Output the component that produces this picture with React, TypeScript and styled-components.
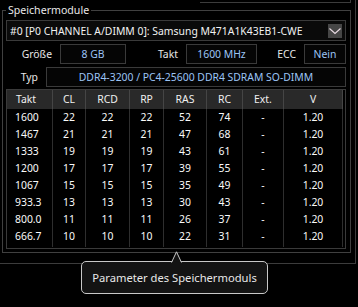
import React from 'react';
import styled, { createGlobalStyle } from 'styled-components';

const GlobalStyle = createGlobalStyle`
  html, body {
    margin: 0;
    padding: 0;
    background: #000;
  }
  body {
    font-family: "Noto Sans", "Liberation Sans", sans-serif;
    font-size: 10.4px;
    color: #e6e6e6;
  }
`;

// ====

const Screen = styled.div`
  position: relative;
  width: 358px;
  height: 307px;
`;

const Page = styled.div`
  width: 356px;
  height: 264px;
  box-sizing: border-box;
  border-right: 1px solid #3c3c3c;
  border-bottom: 1px solid #3c3c3c;
  display: flex;
  flex-direction: column;
`;

const TopEdge = styled.div`
  align-self: flex-start;
  margin-left: 200px;
  width: 151px;
  height: 3px;
  box-sizing: border-box;
  border-right: 1px solid #3c3c3c;
  border-bottom: 1px solid #3c3c3c;
`;

const GroupBox = styled.fieldset`
  margin: 0 0 0 2px;
  width: 349px;
  min-width: 0;
  box-sizing: border-box;
  border: 1px solid #404040;
  padding: 3px 4px 3px 3px;
  display: flex;
  flex-direction: column;
`;

const Legend = styled.legend`
  padding: 0 2px;
  font-size: 10.6px;
  line-height: 14px;
  color: #e8e8e8;
`;

const Combo = styled.div`
  height: 21px;
  box-sizing: border-box;
  border: 1px solid #3a3a3a;
  background: #0a0a0a;
  display: flex;
  align-items: center;
  padding: 0 3px 0 3px;
`;

const ComboText = styled.span`
  flex: 1;
  color: #f2f2f2;
  white-space: nowrap;
  overflow: hidden;
`;

const ComboButton = styled.span`
  width: 14px;
  height: 14px;
  background: #464646;
  display: flex;
  align-items: center;
  justify-content: center;
`;

const FieldRow = styled.div<{ $gap: number }>`
  display: flex;
  height: 20px;
  margin-top: ${({ $gap }) => $gap}px;
`;

const Label = styled.span<{ $w: number }>`
  flex: none;
  width: ${({ $w }) => $w}px;
  box-sizing: border-box;
  padding-right: 8px;
  text-align: right;
  line-height: 20px;
  color: #e8e8e8;
`;

const ValueBox = styled.span<{ $w?: number }>`
  flex: ${({ $w }) => ($w ? 'none' : '1')};
  width: ${({ $w }) => ($w ? `${$w}px` : 'auto')};
  box-sizing: border-box;
  border: 1px solid #3a3a3a;
  background: #050505;
  color: #9cc4f5;
  text-align: center;
  line-height: 18px;
  white-space: nowrap;
`;

const TableWrap = styled.div`
  margin-top: 2px;
  border: 1px solid #3a3a3a;
  padding: 0 2px 1px 0;
`;

const Grid = styled.div`
  display: grid;
  grid-template-columns: 46px 33px 44px 34px 43px 36px 41px 59px;
`;

const HeadCell = styled.div<{ $left?: boolean }>`
  height: 19px;
  box-sizing: border-box;
  background: #292929;
  border-right: 1px solid #454545;
  line-height: 19px;
  text-align: ${({ $left }) => ($left ? 'left' : 'center')};
  padding-left: ${({ $left }) => ($left ? '9px' : '0')};
  color: #f0f0f0;
`;

const Cell = styled.div<{ $left?: boolean; $last?: boolean }>`
  height: ${({ $last }) => ($last ? 19 : 17)}px;
  box-sizing: border-box;
  border-right: 1px solid #2e2e2e;
  line-height: 17px;
  text-align: ${({ $left }) => ($left ? 'left' : 'center')};
  padding-left: ${({ $left }) => ($left ? '8px' : '0')};
  color: #fafafa;
`;

const Tooltip = styled.div`
  position: absolute;
  left: 81px;
  top: 261px;
  width: 187px;
  height: 33px;
  box-sizing: border-box;
  border: 1px solid #c8c8c8;
  border-radius: 5px;
  background: #131313;
  display: flex;
  align-items: center;
  justify-content: center;
`;

const TooltipText = styled.span`
  font-size: 11.2px;
  line-height: 16px;
  color: #e8e8e8;
  white-space: nowrap;
`;

const TooltipArrow = styled.svg`
  position: absolute;
  left: 88px;
  top: -11px;
  width: 12px;
  height: 12px;
  overflow: visible;
`;

const headers = ['Takt', 'CL', 'RCD', 'RP', 'RAS', 'RC', 'Ext.', 'V'];

const rows = [
  ['1600', '22', '22', '22', '52', '74', '-', '1.20'],
  ['1467', '21', '21', '21', '47', '68', '-', '1.20'],
  ['1333', '19', '19', '19', '43', '61', '-', '1.20'],
  ['1200', '17', '17', '17', '39', '55', '-', '1.20'],
  ['1067', '15', '15', '15', '35', '49', '-', '1.20'],
  ['933.3', '13', '13', '13', '30', '43', '-', '1.20'],
  ['800.0', '11', '11', '11', '26', '37', '-', '1.20'],
  ['666.7', '10', '10', '10', '22', '31', '-', '1.20'],
];

const App = () => (
  <Screen>
    <GlobalStyle />
    <Page>
      <TopEdge />
      <GroupBox>
        <Legend>Speichermodule</Legend>
        <Combo>
          <ComboText>#0 [P0 CHANNEL A/DIMM 0]: Samsung M471A1K43EB1-CWE</ComboText>
          <ComboButton>
            <svg width="12" height="8" viewBox="0 0 12 8">
              <polyline points="0.5,1.5 6,6.5 11.5,1.5" fill="none" stroke="#eadce4" strokeWidth="1.1" />
            </svg>
          </ComboButton>
        </Combo>
        <FieldRow $gap={3}>
          <Label $w={54}>Größe</Label>
          <ValueBox $w={66}>8 GB</ValueBox>
          <Label $w={60}>Takt</Label>
          <ValueBox $w={71}>1600 MHz</ValueBox>
          <Label $w={47}>ECC</Label>
          <ValueBox $w={42}>Nein</ValueBox>
        </FieldRow>
        <FieldRow $gap={3}>
          <Label $w={40}>Typ</Label>
          <ValueBox>DDR4-3200 / PC4-25600 DDR4 SDRAM SO-DIMM</ValueBox>
        </FieldRow>
        <TableWrap>
          <Grid>
            {headers.map((h, i) => (
              <HeadCell key={h} $left={i === 0}>{h}</HeadCell>
            ))}
            {rows.map((row, r) =>
              row.map((v, i) => (
                <Cell key={`${r}-${i}`} $left={i === 0} $last={r === rows.length - 1}>
                  {v}
                </Cell>
              )),
            )}
          </Grid>
        </TableWrap>
      </GroupBox>
    </Page>
    <Tooltip>
      <TooltipArrow viewBox="0 0 12 12">
        <polygon points="1.5,12 6.5,1 11.5,12" fill="#131313" />
        <polyline points="1.5,11.5 6.5,0.8 11.5,11.5" fill="none" stroke="#c8c8c8" strokeWidth="1" />
      </TooltipArrow>
      <TooltipText>Parameter des Speichermoduls</TooltipText>
    </Tooltip>
  </Screen>
);

export default App;
